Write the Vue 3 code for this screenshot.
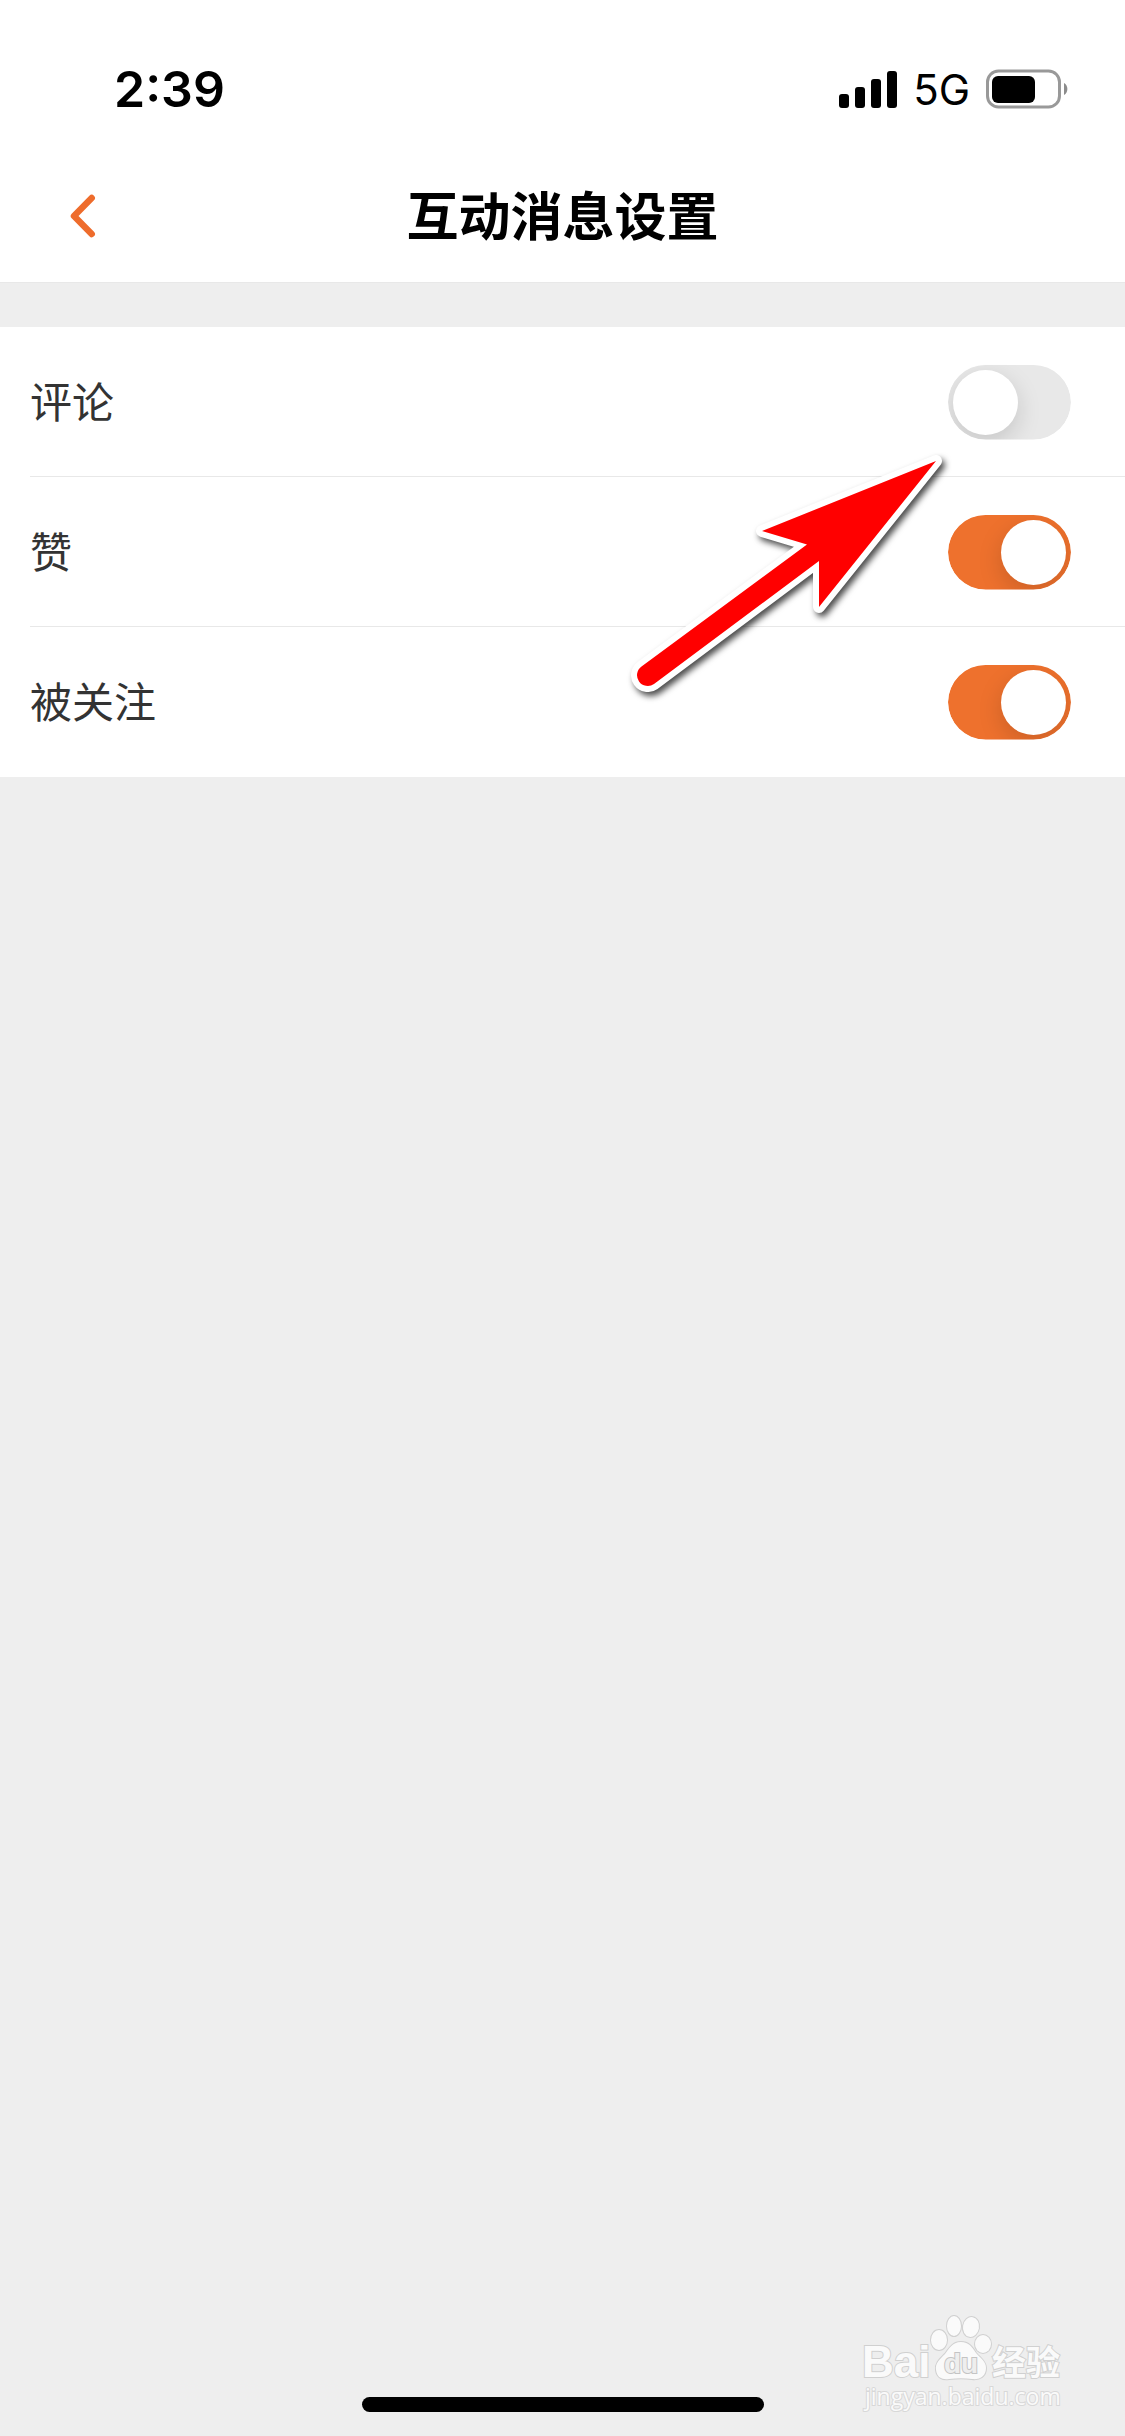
<script setup>
import { ref } from 'vue'

const settings = ref([
  { id: 'comment', label: '评论', on: false },
  { id: 'like', label: '赞', on: true },
  { id: 'follow', label: '被关注', on: true }
])
</script>

<template>
  <div class="screen">
    <header class="top">
      <div class="status">
        <span class="time">2:39</span>
        <div class="indicators">
          <svg class="signal" viewBox="0 0 58 38" aria-hidden="true">
            <rect x="0" y="24" width="10" height="14" rx="3" />
            <rect x="16" y="17" width="10" height="21" rx="3" />
            <rect x="32" y="9" width="10" height="29" rx="3" />
            <rect x="48" y="1" width="10" height="37" rx="3" />
          </svg>
          <span class="network">5G</span>
          <svg class="battery" viewBox="0 0 83 40" aria-hidden="true">
            <rect x="1.5" y="2" width="72" height="36" rx="11" fill="none" stroke="#999" stroke-width="3" />
            <rect x="6" y="7" width="43" height="27" rx="6" />
            <path d="M78 14a7 7 0 0 1 0 12z" fill="#8c8c8c" />
          </svg>
        </div>
      </div>
      <nav class="bar">
        <button class="back" type="button" aria-label="返回">
          <svg viewBox="0 0 26 44" aria-hidden="true">
            <path d="M21.7 4 4 22l17.7 18" fill="none" stroke="#ee6c2c" stroke-width="6.5" stroke-linecap="round" stroke-linejoin="round" />
          </svg>
        </button>
        <h1>互动消息设置</h1>
      </nav>
    </header>

    <main class="list">
      <div v-for="item in settings" :key="item.id" class="row">
        <label :for="item.id">{{ item.label }}</label>
        <input :id="item.id" v-model="item.on" class="switch" type="checkbox" role="switch" />
      </div>
      <svg class="arrow" viewBox="620 445 340 270" aria-hidden="true">
        <path
          d="M936 461 762 531 807 544.5 641.5 666.5A10.5 10.5 0 0 0 654 684L819 561V607Z"
          fill="#f00" stroke="#fff" stroke-width="12" stroke-linejoin="round" paint-order="stroke"
        />
      </svg>
    </main>

    <footer class="bottom">
      <svg class="watermark" viewBox="0 0 285 146" role="img" aria-label="Baidu 经验">
        <g class="mark">
          <text x="22" y="87" class="bai">Bai</text>
          <ellipse cx="99" cy="50" rx="8" ry="10" />
          <ellipse cx="114" cy="36" rx="7" ry="10" />
          <ellipse cx="131" cy="37" rx="8" ry="10" transform="rotate(10 131 37)" />
          <ellipse cx="143" cy="54" rx="8" ry="9" />
          <path d="M121 52C112 52 109 59 105 64C100 69 95 73 96 80C97 88 103 90 109 89C117 88 125 88 132 89C140 90 146 86 146 78C146 71 140 68 136 63C132 57 129 52 121 52Z" />
          <text x="104" y="83" class="du">du</text>
          <text x="152" y="85" class="jy">经验</text>
          <text x="25" y="115" class="url">jingyan.baidu.com</text>
        </g>
      </svg>
      <div class="home"></div>
    </footer>
  </div>
</template>

<style>
body {
  margin: 0;
  background: #eee;
}
</style>

<style scoped>
.screen {
  display: flex;
  flex-direction: column;
  min-height: 100vh;
  background: #eee;
  font-family: Inter, "Noto Sans CJK SC", sans-serif;
  color: #000;
}
.top {
  background: #fff;
  border-bottom: 1px solid #e8e8e8;
}
.status {
  box-sizing: border-box;
  height: 150px;
  padding: 27px 56px 0 114px;
  display: flex;
  align-items: center;
  justify-content: space-between;
}
.time {
  font-size: 50px;
  font-weight: 600;
}
.indicators {
  display: flex;
  align-items: center;
}
.signal {
  width: 58px;
  height: 38px;
}
.network {
  margin: 2px 16px 0;
  font-size: 42px;
}
.battery {
  width: 83px;
  height: 40px;
}
.bar {
  height: 132px;
  display: grid;
  grid-template-columns: 150px 1fr 150px;
  align-items: center;
}
.back {
  height: 100%;
  padding: 0 0 0 70px;
  border: 0;
  background: none;
  display: flex;
  align-items: center;
}
.back svg {
  width: 26px;
  height: 44px;
}
h1 {
  margin: 0;
  padding-bottom: 4px;
  text-align: center;
  font-family: "Noto Sans CJK SC", sans-serif;
  font-size: 52px;
  font-weight: 600;
  line-height: 72px;
}
.list {
  position: relative;
  margin-top: 44px;
  padding-left: 30px;
  background: #fff;
}
.row {
  box-sizing: border-box;
  height: 150px;
  padding: 1px 54px 0 0;
  display: flex;
  align-items: center;
  justify-content: space-between;
  border-bottom: 1px solid #e8e8e8;
}
.row:last-of-type {
  border-bottom-color: transparent;
}
label {
  padding-bottom: 4px;
  font-family: "Noto Sans CJK SC", sans-serif;
  font-size: 42px;
  line-height: 60px;
  color: #333;
}
.switch {
  appearance: none;
  margin: 0;
  width: 123px;
  height: 75px;
  padding: 5px;
  box-sizing: border-box;
  display: flex;
  border-radius: 38px;
  background: #e8e8e8;
  clip-path: inset(0 round 38px);
}
.switch::before {
  content: "";
  width: 65px;
  height: 65px;
  border-radius: 50%;
  background: #fff;
  box-shadow: 0 8px 24px rgba(0, 0, 0, 0.15);
}
.switch:checked {
  justify-content: flex-end;
  background: #ee712d;
}
.arrow {
  position: absolute;
  top: 118px;
  right: 165px;
  width: 340px;
  height: 270px;
  overflow: visible;
  filter: drop-shadow(3px 4px 3px rgba(0, 0, 0, 0.7));
  pointer-events: none;
}
.bottom {
  position: relative;
  margin-top: auto;
  padding-bottom: 24px;
}
.home {
  width: 402px;
  height: 15px;
  margin: 0 auto;
  border-radius: 8px;
  background: #000;
}
.watermark {
  position: absolute;
  right: 0;
  bottom: 0;
  width: 285px;
  height: 146px;
}
.mark {
  fill: #fafafa;
  stroke: #d0d0d0;
  stroke-width: 2px;
  paint-order: stroke;
}
.bai {
  font: 700 44px "Liberation Sans", sans-serif;
}
.du {
  font: 700 28px "Liberation Sans", sans-serif;
  fill: #eee;
  stroke: #c4c4c4;
}
.jy {
  font: 700 34px "Noto Sans CJK SC", sans-serif;
}
.url {
  font: 400 23px "Open Sans", sans-serif;
  stroke: #d8d8d8;
}
</style>
